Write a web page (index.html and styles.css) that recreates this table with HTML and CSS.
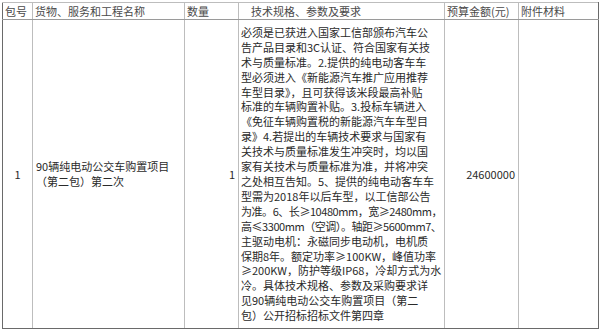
FILE: index.html
```html
<!DOCTYPE html>
<html lang="zh">
<head>
<meta charset="utf-8">
<title>采购需求</title>
<link rel="stylesheet" href="styles.css">
</head>
<body>
<table class="req">
  <colgroup>
    <col class="c-no">
    <col class="c-name">
    <col class="c-qty">
    <col class="c-spec">
    <col class="c-budget">
    <col class="c-att">
  </colgroup>
  <thead>
    <tr class="head">
      <th class="left">包号</th>
      <th class="left">货物、服务和工程名称</th>
      <th class="left">数量</th>
      <th class="spec-head">技术规格、参数及要求</th>
      <th class="left">预算金额(元)</th>
      <th class="left">附件材料</th>
    </tr>
  </thead>
  <tbody>
    <tr class="body">
      <td class="center">1</td>
      <td class="name">90辆纯电动公交车购置项目<br>（第二包）第二次</td>
      <td class="right">1</td>
      <td class="spec">必须是已获进入国家工信部颁布汽车公<br>告产品目录和3C认证、符合国家有关技<br>术与质量标准。2.提供的纯电动客车车<br>型必须进入《新能源汽车推广应用推荐<br>车型目录》，且可获得该米段最高补贴<br>标准的车辆购置补贴。3.投标车辆进入<br>《免征车辆购置税的新能源汽车车型目<br>录》4.若提出的车辆技术要求与国家有<br>关技术与质量标准发生冲突时，均以国<br>家有关技术与质量标准为准，并将冲突<br>之处相互告知。5、提供的纯电动客车车<br>型需为2018年以后车型，以工信部公告<br><span class="tight">为准。6、长≥10480mm，宽≥2480mm，</span><br><span class="tight">高≤3300mm（空调）。轴距≥5600mm7、</span><br>主驱动电机：永磁同步电动机，电机质<br>保期8年。额定功率≥100KW，峰值功率<br>≥200KW，防护等级IP68，冷却方式为水<br>冷。具体技术规格、参数及采购要求详<br>见90辆纯电动公交车购置项目（第二<br>包）公开招标招标文件第四章</td>
      <td class="right">24600000</td>
      <td></td>
    </tr>
  </tbody>
</table>
</body>
</html>
```

FILE: styles.css
```css
html, body {
  margin: 0;
  padding: 0;
  background: #ffffff;
}

body {
  padding: 2px 0 0 2px;
  font-family: "Noto Sans CJK SC", "Noto Sans", sans-serif;
  font-size: 11px;
  color: #2a2a2a;
}

.req {
  width: 596px;
  table-layout: fixed;
  border-collapse: collapse;
  border: 1px solid #6a6a6a;
}

.c-no { width: 30px; }
.c-name { width: 152px; }
.c-qty { width: 54px; }
.c-spec { width: 206px; }
.c-budget { width: 74px; }
.c-att { width: 80px; }

.req th,
.req td {
  border: 1px solid #bdbdbd;
  padding: 0 2px;
  font-weight: normal;
  vertical-align: middle;
  overflow: hidden;
}

.req thead th {
  border-bottom-color: #9a9a9a;
}

.req th:first-child,
.req td:first-child {
  border-left-color: #6a6a6a;
}

.req th:last-child,
.req td:last-child {
  border-right-color: #6a6a6a;
}

.req tbody td {
  border-bottom-color: #6a6a6a;
}

.req .head th {
  height: 16px;
  line-height: 16px;
  color: #4a4a4a;
  white-space: nowrap;
}

.req .body {
  height: 309px;
}

.req .left {
  text-align: left;
}

.req .spec-head {
  text-align: left;
  padding-left: 12px;
}

.req .center {
  text-align: center;
}

.req .right {
  text-align: right;
  padding-right: 3px;
}

.req .name {
  line-height: 15px;
  padding-left: 3px;
}

.req .spec {
  vertical-align: middle;
  line-height: 14.9px;
  padding: 0 2px;
  white-space: nowrap;
}

.tight {
  letter-spacing: -0.45px;
}
```
